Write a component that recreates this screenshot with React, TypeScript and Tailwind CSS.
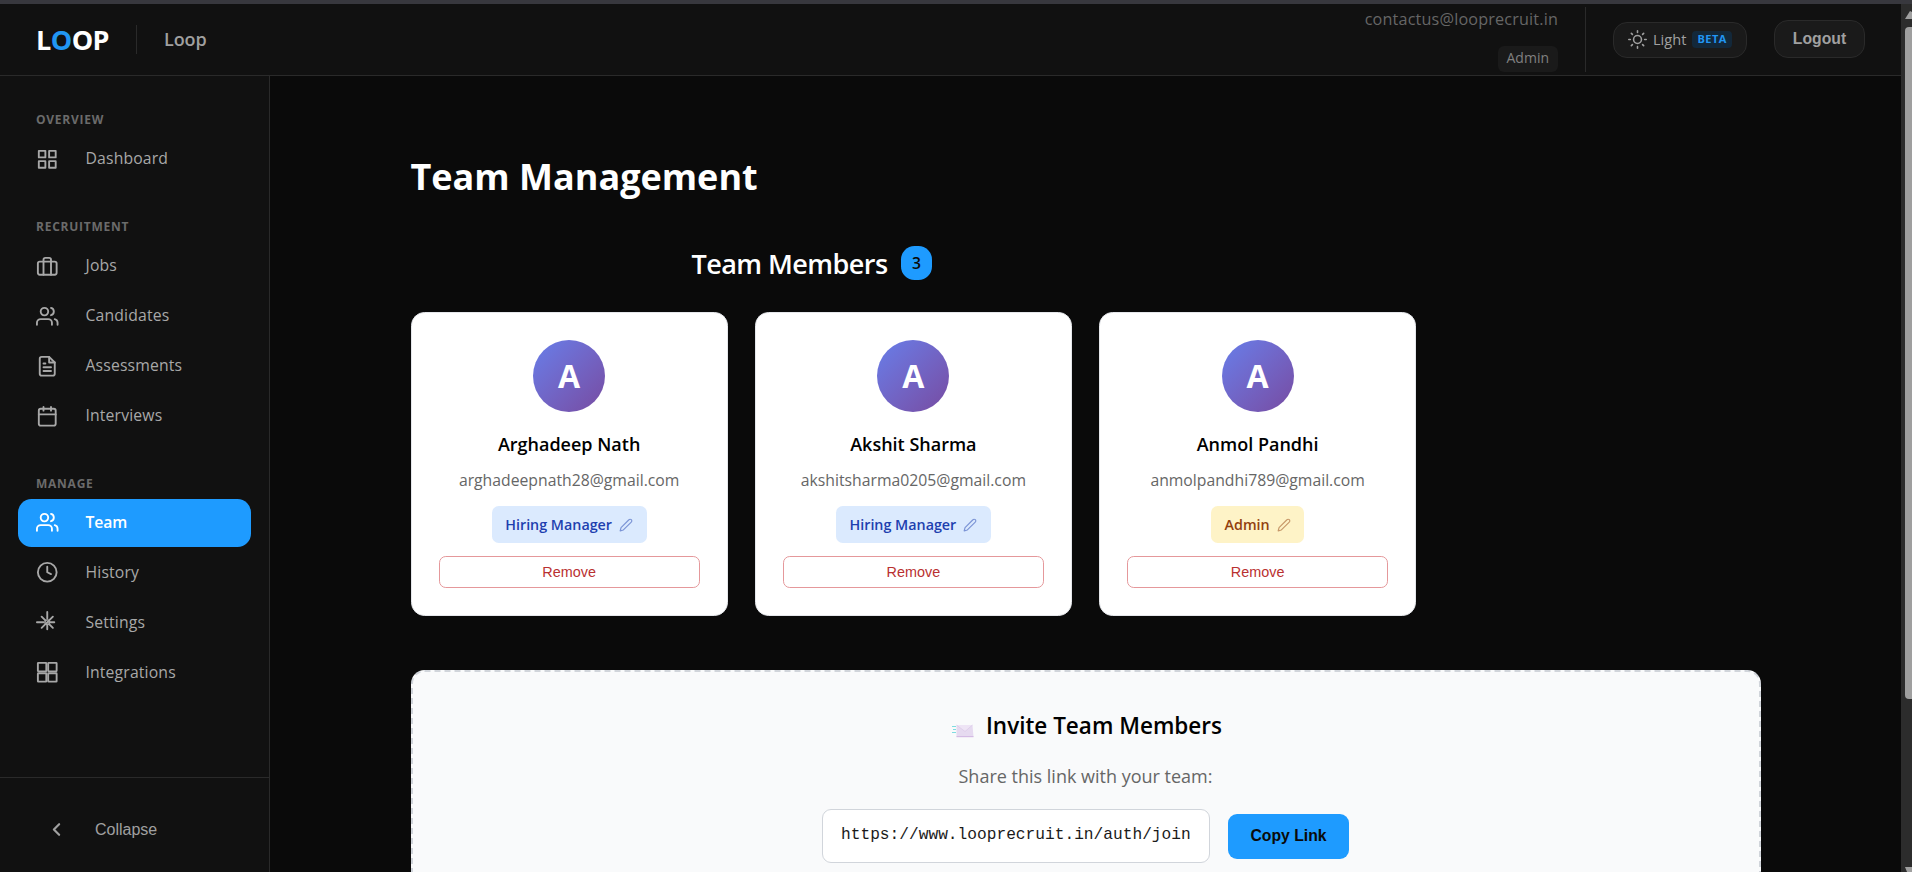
import { ReactNode } from "react";

const members = [
  { name: "Arghadeep Nath", email: "arghadeepnath28@gmail.com", role: "Hiring Manager" },
  { name: "Akshit Sharma", email: "akshitsharma0205@gmail.com", role: "Hiring Manager" },
  { name: "Anmol Pandhi", email: "anmolpandhi789@gmail.com", role: "Admin" },
];

const UsersPaths = () => (
  <>
    <path d="M17 21v-2a4 4 0 0 0-4-4H5a4 4 0 0 0-4 4v2" />
    <circle cx="9" cy="7" r="4" />
    <path d="M23 21v-2a4 4 0 0 0-3-3.87M16 3.13a4 4 0 0 1 0 7.75" />
  </>
);

const sections: { title: string; items: { label: string; icon: ReactNode; active?: boolean }[] }[] = [
  {
    title: "OVERVIEW",
    items: [
      {
        label: "Dashboard",
        icon: (
          <>
            <rect x="3" y="3" width="7" height="7" />
            <rect x="14" y="3" width="7" height="7" />
            <rect x="14" y="14" width="7" height="7" />
            <rect x="3" y="14" width="7" height="7" />
          </>
        ),
      },
    ],
  },
  {
    title: "RECRUITMENT",
    items: [
      {
        label: "Jobs",
        icon: (
          <>
            <rect x="2" y="7" width="20" height="14" rx="2" />
            <path d="M16 21V5a2 2 0 0 0-2-2h-4a2 2 0 0 0-2 2v16" />
          </>
        ),
      },
      { label: "Candidates", icon: <UsersPaths /> },
      {
        label: "Assessments",
        icon: (
          <>
            <path d="M14 2H6a2 2 0 0 0-2 2v16a2 2 0 0 0 2 2h12a2 2 0 0 0 2-2V8z" />
            <path d="M14 2v6h6M16 13H8M16 17H8M10 9H8" />
          </>
        ),
      },
      {
        label: "Interviews",
        icon: (
          <>
            <rect x="3" y="4" width="18" height="18" rx="2" />
            <path d="M16 2v4M8 2v4M3 10h18" />
          </>
        ),
      },
    ],
  },
  {
    title: "MANAGE",
    items: [
      { label: "Team", icon: <UsersPaths />, active: true },
      {
        label: "History",
        icon: (
          <>
            <circle cx="12" cy="12" r="10" />
            <path d="M12 6v6l4 2" />
          </>
        ),
      },
      {
        label: "Settings",
        icon: (
          <>
            <circle cx="12" cy="12" r="2.5" strokeWidth="1.5" />
            <path d="M12 1v7M12 14v5.500M1 12h7M14 12h5.500M6 6l4 4M14 14l4 4M18 6l-7.500 7.500M10 14l-4 4" />
          </>
        ),
      },
      {
        label: "Integrations",
        icon: (
          <>
            <rect x="2" y="2" width="9" height="9" rx=".5" />
            <rect x="13" y="2" width="9" height="9" rx=".5" />
            <rect x="2" y="13" width="9" height="9" rx=".5" />
            <rect x="13" y="13" width="9" height="9" rx=".5" />
          </>
        ),
      },
    ],
  },
];

const Icon = ({ className, children }: { className: string; children: ReactNode }) => (
  <svg viewBox="0 0 24 24" fill="none" stroke="currentColor" strokeWidth="2" strokeLinecap="round" strokeLinejoin="round" className={className}>
    {children}
  </svg>
);

const Header = () => (
  <header className="flex h-[72px] shrink-0 items-center border-b border-[#2a2a2a] bg-[#111111] pl-9 pr-9">
    <div className="text-[27px] font-bold leading-none tracking-[-0.54px] text-white">
      L<span className="text-[#2196f3]">O</span>OP
    </div>
    <div className="ml-[27px] h-[29px] w-px bg-[#2a2a2a]" />
    <div className="ml-[27px] text-[18px] font-semibold tracking-[-0.1px] text-[#a0a0a0]">Loop</div>
    <div className="ml-auto flex h-[65px] flex-col items-end justify-between border-r border-[#2a2a2a] pr-[27px]">
      <span className="text-[16.2px] leading-[24px] tracking-[0.16px] text-[#666666]">contactus@looprecruit.in</span>
      <span className="flex h-[26px] items-center rounded-[6px] bg-[#1a1a1a] px-[9px] pb-[3px] text-[14px] font-medium text-[#808080]">Admin</span>
    </div>
    <button className="ml-[27px] flex h-9 w-[134px] items-center rounded-[14px] border border-[#2a2a2a] bg-[#1a1a1a] pl-[14px] text-[14.6px] text-[#a0a0a0]">
      <Icon className="size-[19px]">
        <circle cx="12" cy="12" r="5" />
        <path d="M12 1v2M12 21v2M4.2 4.2l1.4 1.4M18.4 18.4l1.4 1.4M1 12h2M21 12h2M4.2 19.8l1.4-1.4M18.4 5.6l1.4-1.4" />
      </Icon>
      <span className="ml-[6px]">Light</span>
      <span className="ml-[6px] flex h-[17px] items-center rounded-[4px] bg-[#13283a] px-[5px] text-[11px] font-bold tracking-[0.5px] text-[#2196f3]">BETA</span>
    </button>
    <button className="mb-[2px] ml-[27px] h-[38px] w-[91px] rounded-[14px] border border-[#2a2a2a] bg-[#1a1a1a] font-['Liberation_Sans',sans-serif] text-[15.75px] font-bold text-[#a0a0a0]">
      Logout
    </button>
  </header>
);

const Sidebar = () => (
  <aside className="flex w-[270px] shrink-0 flex-col border-r border-[#2a2a2a] bg-[#111111]">
    <nav className="flex flex-1 flex-col gap-[33.75px] px-[18px] pt-[34px]">
      {sections.map((section) => (
        <div key={section.title}>
          <div className="h-[25px] pl-[18px] text-[12px] font-bold leading-[19px] tracking-[0.75px] text-[#6b6b6b]">{section.title}</div>
          <div className="flex flex-col gap-[2px]">
            {section.items.map((item) => (
              <div
                key={item.label}
                className={
                  item.active
                    ? "flex h-12 items-center rounded-[13.5px] bg-[#1e9bff] pl-[18px] text-[15.75px] font-semibold tracking-[-0.1px] text-white"
                    : "flex h-12 items-center rounded-[13.5px] pl-[18px] text-[15.75px] font-medium tracking-[0.15px] text-[#a8a8a8]"
                }
              >
                <Icon className="size-[22.5px]">{item.icon}</Icon>
                <span className="ml-[27px]">{item.label}</span>
              </div>
            ))}
          </div>
        </div>
      ))}
    </nav>
    <div className="flex h-[95px] items-center border-t border-[#2a2a2a] pl-[46px] pt-[9px] font-['Liberation_Sans',sans-serif] text-[16px] text-[#a0a0a0]">
      <svg viewBox="0 0 24 24" fill="none" stroke="currentColor" strokeWidth="2.500" strokeLinecap="round" strokeLinejoin="round" className="size-[21px]">
        <path d="M15 18l-6-6 6-6" />
      </svg>
      <span className="ml-[28px]">Collapse</span>
    </div>
  </aside>
);

const MemberCard = ({ name, email, role }: { name: string; email: string; role: string }) => (
  <div className="flex h-[304px] flex-col items-center rounded-[13.5px] border border-[#e5e7eb] bg-white px-[27px] pt-[27px]">
    <div className="flex size-[72px] shrink-0 items-center justify-center rounded-full bg-linear-135 from-[#667eea] to-[#764ba2] text-[32px] font-bold text-white">
      {name[0]}
    </div>
    <h3 className="mt-[18px] text-[18px] font-semibold leading-[28px] text-black">{name}</h3>
    <p className="mt-[10px] text-[15.75px] leading-[25px] text-[#666666]">{email}</p>
    <div
      className={
        role === "Admin"
          ? "mt-[13px] flex h-[37px] items-center gap-[7px] rounded-[6.75px] bg-[#fef3c7] px-[13.5px] text-[14.3px] font-semibold text-[#92400e]"
          : "mt-[13px] flex h-[37px] items-center gap-[7px] rounded-[6.75px] bg-[#dbeafe] px-[13.5px] text-[14.3px] font-semibold text-[#1e40af]"
      }
    >
      {role}
      <Icon className="size-[14px] opacity-50">
        <path d="M17 3a2.83 2.83 0 1 1 4 4L7.500 20.500 2 22l1.500-5.500L17 3z" />
      </Icon>
    </div>
    <button className="mt-[13px] h-8 w-full rounded-[6.75px] border border-[#e5989b] pt-px font-['Liberation_Sans',sans-serif] text-[14.4px] text-[#b93030]">
      Remove
    </button>
  </div>
);

const Envelope = () => (
  <svg viewBox="0 0 22 14" className="mt-[10px] h-[14px] w-[22px]">
    <path d="M0 2.500h4M1 5.500h3M0 8.500h4" stroke="#7fdce0" strokeWidth="1.200" />
    <path d="M4.500 1h16l1 12h-17z" fill="#e6daf0" />
    <path d="M4.500 1l8.500 6.500L20.500 1" fill="#eee4f5" stroke="#d6c4e4" strokeWidth=".6" />
    <path d="M4.500 12.700h17" stroke="#c9a9dc" strokeWidth=".8" />
  </svg>
);

const InviteSection = () => (
  <section className="mt-[54px] flex h-[300px] flex-col items-center rounded-[13.5px] border-2 border-dashed border-[#d1d5db] bg-[#f9fafb]">
    <h2 className="mt-[36px] flex h-[36px] items-center gap-[12px] pl-[3px] text-[22.5px] font-semibold text-black">
      <Envelope />
      Invite Team Members
    </h2>
    <p className="mt-[18px] text-[18px] leading-[28px] text-[#666666]">Share this link with your team:</p>
    <div className="mt-[19px] flex items-center gap-[18px]">
      <div className="flex h-[54px] w-[388px] items-center rounded-[9px] border border-[#d1d5db] bg-white pb-px pl-[18px] font-['Liberation_Mono',monospace] text-[16.2px] text-[#1a1a1a]">
        https://www.looprecruit.in/auth/join
      </div>
      <button className="h-[45px] w-[121px] rounded-[9px] bg-[#1e9bff] font-['Liberation_Sans',sans-serif] text-[15.75px] font-bold text-[#0a0a0a]">
        Copy Link
      </button>
    </div>
  </section>
);

const Scrollbar = () => (
  <div className="flex w-[11px] shrink-0 flex-col items-end bg-[#2c2c2c] pt-[6px]">
    <svg viewBox="0 0 7 10" className="h-[10px] w-[7px]">
      <path d="M0 9L5 1l2 1v7z" fill="#9f9f9f" />
    </svg>
    <div className="mt-[7px] h-[672px] w-[7px] rounded-l-[4px] bg-[#9f9f9f]" />
    <svg viewBox="0 0 7 5" className="mt-auto h-[5px] w-[7px]">
      <path d="M0 0h7v5H2z" fill="#9f9f9f" />
    </svg>
  </div>
);

export default function App() {
  return (
    <div className="flex h-[872px] w-[1912px] flex-col overflow-hidden bg-[#0a0a0a] font-['Open_Sans',sans-serif]">
      <div className="h-1 shrink-0 bg-[#38383e]" />
      <div className="flex min-h-0 flex-1">
        <div className="flex min-w-0 flex-1 flex-col">
          <Header />
          <div className="flex min-h-0 flex-1">
            <Sidebar />
            <main className="min-w-0 flex-1 overflow-hidden px-[140.5px] pt-[74px]">
              <h1 className="text-[36px] font-bold leading-[54px] text-white">Team Management</h1>
              <div className="ml-[281px] mt-[42px] flex h-[34px] items-center">
                <h2 className="pt-[2px] text-[27px] font-semibold tracking-[-0.55px] text-white">Team Members</h2>
                <span className="ml-[13px] flex h-[34px] w-[31px] items-center justify-center rounded-[13.5px] bg-[#1e9bff] pl-px pt-px text-[15.75px] font-semibold text-[#0a0a0a]">
                  3
                </span>
              </div>
              <div className="mt-[32px] grid grid-cols-4 gap-[27px]">
                {members.map((member) => (
                  <MemberCard key={member.email} {...member} />
                ))}
              </div>
              <InviteSection />
            </main>
          </div>
        </div>
        <Scrollbar />
      </div>
    </div>
  );
}
